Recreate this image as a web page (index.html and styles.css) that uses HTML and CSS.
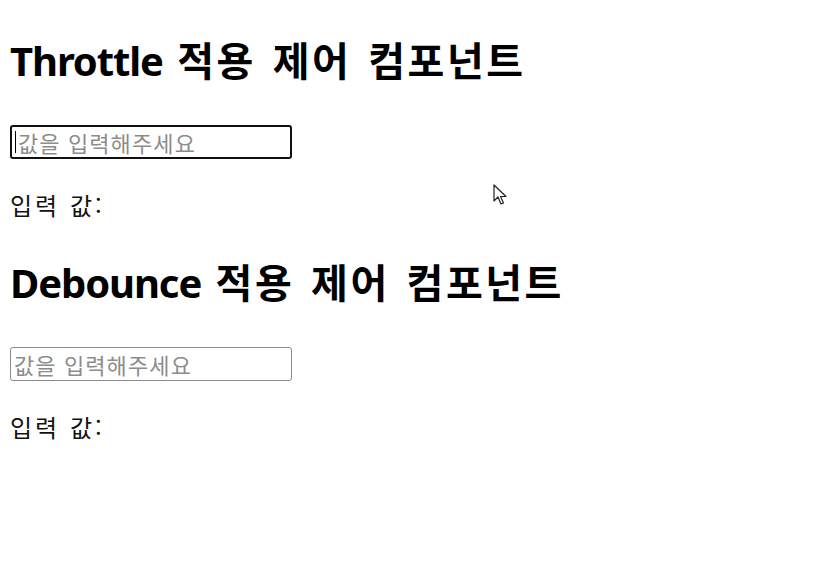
FILE: index.html
```html
<!DOCTYPE html>
<html lang="ko">
<head>
<meta charset="utf-8">
<link rel="stylesheet" href="styles.css">
</head>
<body>
<div class="app">
  <section class="block">
    <h1 class="title"><span class="latin">Throttle</span> <span class="hangul">적용 제어 컴포넌트</span></h1>
    <div class="field"><input class="input focused" type="text" placeholder="값을 입력해주세요"><span class="caret"></span></div>
    <p class="value">입력 값:</p>
  </section>
  <section class="block">
    <h1 class="title"><span class="latin">Debounce</span> <span class="hangul">적용 제어 컴포넌트</span></h1>
    <div class="field"><input class="input" type="text" placeholder="값을 입력해주세요"></div>
    <p class="value">입력 값:</p>
  </section>
</div>
<svg class="cursor" width="14" height="22" viewBox="0 0 14 22">
  <path d="M1 1 L1 17 L5 13 L8 20 L10.5 19 L7.5 12.5 L13 12.5 Z" fill="#fff" stroke="#222" stroke-width="1.2" stroke-linejoin="round"/>
</svg>
</body>
</html>
```
FILE: styles.css
```css
html, body {
  margin: 0;
  padding: 0;
  background: #fff;
}
body {
  padding: 10px;
  font-family: "Noto Sans", "Noto Sans CJK KR", sans-serif;
  color: #000;
  font-size: 20px;
}
.title {
  font-size: 40px;
  font-weight: 700;
  line-height: 52px;
  margin: 25px 0 0 0;
  word-spacing: 4px;
}
.latin {
  letter-spacing: -1.1px;
}
.hangul {
  letter-spacing: 2.5px;
  word-spacing: 4px;
}
.field {
  margin-top: 38px;
  position: relative;
}
.input {
  box-sizing: border-box;
  width: 282px;
  height: 34px;
  border: 1px solid #8a8a8a;
  border-radius: 3px;
  padding: 0 3px;
  font-family: "Noto Sans CJK KR", sans-serif;
  font-size: 22px;
  letter-spacing: 1.1px;
  outline: none;
  background: #fff;
  display: block;
}
.input::placeholder {
  color: #8c8c8c;
}
.input.focused {
  border: 2px solid #111;
  padding: 0 2px 0 6px;
}
.caret {
  position: absolute;
  left: 5px;
  top: 6px;
  width: 1px;
  height: 22px;
  background: #000;
}
.value {
  margin: 29px 0 0 0;
  font-family: "Noto Sans CJK KR", sans-serif;
  font-size: 24px;
  letter-spacing: 3px;
  line-height: 34px;
  color: #111;
}
.block + .block {
  margin-top: 35px;
}
.cursor {
  position: absolute;
  left: 493px;
  top: 184px;
}
```
